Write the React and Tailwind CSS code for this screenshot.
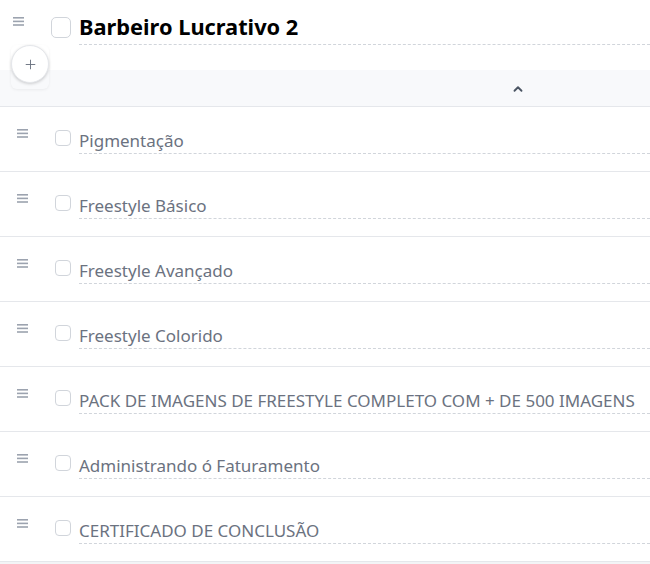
import { Plus, ChevronUp } from "lucide-react"

const items = [
  "Pigmentação",
  "Freestyle Básico",
  "Freestyle Avançado",
  "Freestyle Colorido",
  "PACK DE IMAGENS DE FREESTYLE COMPLETO COM + DE 500 IMAGENS",
  "Administrando ó Faturamento",
  "CERTIFICADO DE CONCLUSÃO",
]

function DragHandle({ className }) {
  return (
    <svg width="11" height="9" viewBox="0 0 11 9" className={className}>
      <rect x="0" y="0" width="11" height="1.6" fill="#9ca3af" />
      <rect x="0" y="3.6" width="11" height="1.6" fill="#9ca3af" />
      <rect x="0" y="7.2" width="11" height="1.6" fill="#9ca3af" />
    </svg>
  )
}

function ItemRow({ title }) {
  return (
    <div className="flex h-[65px] items-start border-b border-[#e5e7eb] bg-white">
      <div className="w-[17px]" />
      <DragHandle className="mt-[22px]" />
      <div className="ml-[27px] mt-[23px] h-[16px] w-[16px] rounded-[4px] border border-[#d1d5db] bg-white" />
      <div className="ml-[8px] mt-[22px] flex-1 border-b border-dashed border-[#d1d5db]">
        <span className="whitespace-nowrap text-[17px] leading-[24px] text-[#6b7280]">{title}</span>
      </div>
    </div>
  )
}

export default function App() {
  return (
    <div
      className="min-h-[564px] w-[650px] overflow-hidden bg-[#f3f4f6]"
      style={{ fontFamily: '"Noto Sans", "Open Sans", sans-serif' }}
    >
      <div className="relative border-b border-[#e5e7eb] bg-white">
        <div className="flex h-[70px] items-start">
          <div className="w-[13px]" />
          <DragHandle className="mt-[17px]" />
          <div className="ml-[27px] mt-[17px] h-[21px] w-[20px] rounded-[5px] border border-[#d1d5db] bg-white" />
          <div className="ml-[8px] mt-[12px] flex-1 border-b border-dashed border-[#d1d5db] pb-[2px]">
            <span className="whitespace-nowrap text-[21.8px] font-bold leading-[30px] text-black">
              Barbeiro Lucrativo 2
            </span>
          </div>
        </div>
        <div className="flex h-[36px] items-center bg-[#f8f9fb]">
          <ChevronUp size={14} strokeWidth={3.2} className="ml-[511px] mt-[2px] text-[#4b5563]" />
        </div>
        <div className="absolute left-[11px] top-[45px] h-[44px] w-[38px] rounded-[6px] shadow-[0_1px_3px_rgba(0,0,0,0.06)]">
          <div className="flex h-[38px] w-[38px] items-center justify-center rounded-full border border-[#e5e7eb] bg-white shadow-[0_1px_3px_rgba(0,0,0,0.18)]">
            <Plus size={15} strokeWidth={1.5} className="text-[#6b7280]" />
          </div>
        </div>
      </div>
      {items.map((t) => (
        <ItemRow key={t} title={t} />
      ))}
    </div>
  )
}
